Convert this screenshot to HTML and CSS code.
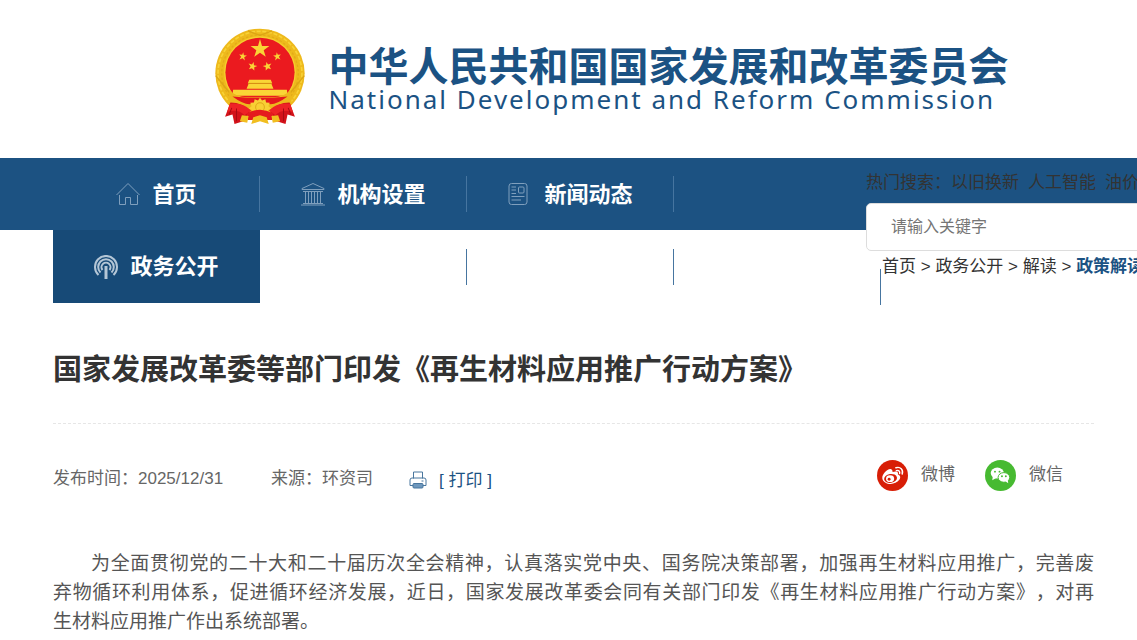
FILE: index.html
```html
<!DOCTYPE html>
<html lang="zh-CN">
<head>
    <meta charset="UTF-8">
    <meta name="viewport" content="width=device-width, initial-scale=1.0">
    <title>国家发展改革委等部门印发《再生材料应用推广行动方案》</title>
    <link rel="stylesheet" href="styles.css">
</head>
<body>
    <header class="site-header">
        <svg class="emblem" viewBox="30 28 268 288" aria-hidden="true">
            <circle cx="164" cy="161" r="133" fill="#eeb91c"/>
            <circle cx="164" cy="161" r="125" fill="none" stroke="#f8d236" stroke-width="5" stroke-dasharray="12 5"/>
            <circle cx="164" cy="161" r="114" fill="none" stroke="#e3ab18" stroke-width="4" stroke-dasharray="7 6"/>
            <circle cx="164" cy="158" r="107" fill="#f5cd2d"/>
            <circle cx="164" cy="158" r="103" fill="#eb1a1f"/>
            <path d="M32 168 L76 222 M296 168 L252 222 M128 35 L164 48 L200 35" fill="none" stroke="#dca515" stroke-width="4"/>
            <g fill="#fad536">
                <path d="M164 59 L170 80 L192 80 L175 92 L181 112 L164 100 L147 112 L153 92 L136 80 L158 80 Z"/>
                <path d="M114 98 L116 107 L125 108 L117 113 L119 123 L112 116 L103 120 L108 112 L102 105 L111 106 Z"/>
                <path d="M214 98 L212 107 L203 108 L211 113 L209 123 L216 116 L225 120 L220 112 L226 105 L217 106 Z"/>
                <path d="M145 127 L146 137 L156 139 L147 143 L147 153 L140 146 L131 149 L136 140 L130 132 L140 135 Z"/>
                <path d="M183 127 L182 137 L172 139 L181 143 L181 153 L188 146 L197 149 L192 140 L198 132 L188 135 Z"/>
                <path d="M132 180 H196 L200 190 H128 Z M130 192 H198 L204 207 H124 Z M84 210 H244 L246 228 H82 Z"/>
            </g>
            <path d="M128 191 H200" stroke="#d59a12" stroke-width="3"/>
            <path d="M73 210 Q90 232 128 232 H200 Q238 232 255 210 L258 250 Q210 260 199 280 H129 Q118 260 70 250 Z" fill="#edb71d"/>
            <path d="M82 230 Q120 258 140 252 H188 Q208 258 246 230 L200 234 H128 Z" fill="#e4181d"/>
            <path d="M76 248 L60 290 L82 284 L88 312 L114 304 L134 276 Q112 248 76 248 Z M252 248 L268 290 L246 284 L240 312 L214 304 L194 276 Q216 248 252 248 Z" fill="#d3121a"/>
            <path d="M74 252 Q112 246 138 272 L118 286 Q98 266 66 276 Z M254 252 Q216 246 190 272 L210 286 Q230 266 262 276 Z" fill="#ee2226"/>
            <path d="M164 234 L170 242 L180 238 L182 248 L193 249 L189 259 L197 266 L187 271 L188 281 H140 L141 271 L131 266 L139 259 L135 249 L146 248 L148 238 L158 242 Z" fill="#f8d034"/>
            <circle cx="164" cy="262" r="13" fill="none" stroke="#e0a71a" stroke-width="3"/>
            <path d="M125 280 Q164 259 203 280 L200 300 H128 Z" fill="#e51a1e"/>
            <path d="M110 286 L130 288 L126 308 L104 304 Z M218 286 L198 288 L202 308 L224 304 Z M144 292 L164 286 L184 292 L190 312 L164 304 L138 312 Z" fill="#f1be20"/>
            <path d="M80 264 L72 284 M94 266 L94 304 M248 264 L256 284 M234 266 L234 304" stroke="#a80b13" stroke-width="3"/>
        </svg>
        <div class="site-name">
            <div class="site-name-cn">中华人民共和国国家发展和改革委员会</div>
            <div class="site-name-en">National Development and Reform Commission</div>
        </div>
    </header>

    <nav class="main-nav">
        <ul class="nav-row">
            <li>
                <a href="#">
                    <svg class="nav-icon" viewBox="0 0 24 24" aria-hidden="true"><path d="M.5 13 L12 1.500 L23.500 13 M3.500 13 V22.500 H9.500 V15.500 H14.500 V22.500 H21.500 V13"/></svg>
                    <span>首页</span>
                </a>
            </li>
            <li>
                <a href="#">
                    <svg class="nav-icon" viewBox="0 0 24 24" aria-hidden="true"><path d="M1 6.500 L12 1.500 L23 6.500 V7.500 H1 Z M2 9.500 H22 M4.500 10 V21 M7.500 10 V21 M10.500 10 V21 M13.500 10 V21 M16.500 10 V21 M19.500 10 V21 M2 21.500 H22 M0 23 H24"/></svg>
                    <span>机构设置</span>
                </a>
            </li>
            <li>
                <a href="#">
                    <svg class="nav-icon nav-icon-news" viewBox="0 0 20 24" aria-hidden="true"><rect x="1" y="1.500" width="18" height="21" rx="2.500"/><rect x="10.500" y="5" width="5.500" height="6" rx="1"/><path d="M3.500 5 H8 M3.500 8 H8 M3.500 11.500 H8 M3.500 14.500 H16.500 M3.500 18 H13"/></svg>
                    <span>新闻动态</span>
                </a>
            </li>
        </ul>
        <ul class="nav-row nav-row-second">
            <li class="active">
                <a href="#">
                    <svg class="nav-icon nav-icon-open" viewBox="0 0 24 24" aria-hidden="true"><path d="M4.500 20 A11 11 0 1 1 19.500 20 M6.500 17.500 A7.800 7.800 0 1 1 17.500 17.500 M8.500 15 A4.500 4.500 0 1 1 15.500 15"/><path class="mast" d="M12 11 V24"/></svg>
                    <span>政务公开</span>
                </a>
            </li>
            <li></li>
            <li></li>
            <li class="last"></li>
        </ul>
        <div class="search-panel">
            <div class="hot-words">热门搜索：<a href="#">以旧换新</a><a href="#">人工智能</a><a href="#">油价</a></div>
            <input class="search-input" type="text" placeholder="请输入关键字" aria-label="请输入关键字">
            <div class="breadcrumb"><a href="#">首页</a> &gt; <a href="#">政务公开</a> &gt; <a href="#">解读</a> &gt; <a class="current" href="#">政策解读</a></div>
        </div>
    </nav>

    <main class="article">
        <h1>国家发展改革委等部门印发《再生材料应用推广行动方案》</h1>
        <div class="article-info">
            <span class="publish-time">发布时间：2025/12/31</span>
            <span class="source">来源：环资司</span>
            <button class="print" type="button">
                <svg class="print-icon" viewBox="0 0 18 18" aria-hidden="true"><path d="M4.500 7.500 V1 H13.500 V7.500 M4 14.500 H1 V9 Q1 7 3 7 H15 Q17 7 17 9 V14.500 H14" fill="#fff"/><rect class="paper" x="4" y="12.500" width="10" height="4.500" rx="1"/><path d="M12.500 10 H14.500"/></svg>
                [ 打印 ]
            </button>
            <div class="share">
                <a href="#">
                    <svg class="share-icon" viewBox="0 0 32 32" aria-hidden="true">
                        <circle cx="16" cy="16" r="16" fill="#d81e06"/>
                        <path d="M5.500 19 C5 15 11 8.500 14.500 9.500 C16.500 10 16 12.500 16 12.500 C20 11 22.500 12 21.500 15 C24 15.800 24.800 18 23 20.500 C18.500 27 6.500 25.500 5.500 19 Z" fill="#fff"/>
                        <ellipse cx="14" cy="19" rx="6.700" ry="4.600" transform="rotate(-9 14 19)" fill="#d81e06"/>
                        <ellipse cx="13.500" cy="19.300" rx="4.200" ry="3.500" fill="#fff"/>
                        <circle cx="12.500" cy="19.800" r="1.500" fill="#d81e06"/>
                        <path d="M19.500 8 C24 6.500 27.500 10 26 14.500 M20 11 C22.500 10.200 24 12 23.300 14" fill="none" stroke="#fff" stroke-width="1.500" stroke-linecap="round"/>
                    </svg>
                    微博
                </a>
                <a href="#">
                    <svg class="share-icon" viewBox="0 0 32 32" aria-hidden="true">
                        <circle cx="16" cy="16" r="16" fill="#47ba31"/>
                        <ellipse cx="12.700" cy="13.500" rx="6.800" ry="5.700" fill="#fff"/>
                        <path d="M8 17 L7.500 21 L11.500 18.500 Z" fill="#fff"/>
                        <ellipse cx="19.500" cy="18" rx="6" ry="5" fill="#fff" stroke="#47ba31"/>
                        <path d="M21 22 L24 24 L23.500 20.500 Z" fill="#fff"/>
                        <g fill="#47ba31"><circle cx="10.300" cy="12" r="1"/><circle cx="15" cy="12" r="1"/><circle cx="17.500" cy="16.700" r="1"/><circle cx="21.500" cy="16.700" r="1"/></g>
                    </svg>
                    微信
                </a>
            </div>
        </div>
        <p class="article-text">为全面贯彻党的二十大和二十届历次全会精神，认真落实党中央、国务院决策部署，加强再生材料应用推广，完善废<span class="keep">弃物</span>循环利用体系，促进循环经济发展，近日，国家发展改革委会同有关部门印发《再生材料应用推广行动方案》，对再<span class="keep">生材</span>料应用推广作出系统部署。</p>
    </main>
</body>
</html>
```
FILE: styles.css
```css
* {
    box-sizing: border-box;
}
body {
    margin: 0;
    font-family: "Liberation Sans", "Noto Sans CJK SC", sans-serif;
    font-size: 17px;
    color: #333;
    background-color: #fff;
    overflow-x: hidden;
    text-spacing-trim: space-all;
}
a {
    color: inherit;
    text-decoration: none;
}
ul {
    list-style: none;
    margin: 0;
    padding: 0;
}

/* header */
.site-header {
    display: flex;
    justify-content: center;
    gap: 24px;
    padding: 28px 0 32px 86px;
    color: #1b5283;
}
.emblem {
    width: 90px;
    height: 98px;
}
.site-name {
    padding-top: 19px;
    white-space: nowrap;
}
.site-name-cn {
    font-size: 40px;
    font-weight: bold;
    line-height: 40px;
}
.site-name-en {
    font-family: "Noto Sans", sans-serif;
    font-size: 26px;
    line-height: 24px;
    letter-spacing: 2px;
}

/* navigation */
.main-nav {
    position: relative;
    background: linear-gradient(#1c5282 72px, #fff 72px);
}
.nav-row {
    display: flex;
    padding-left: 53px;
}
.nav-row li {
    display: flex;
    flex: 0 0 207px;
    height: 72px;
    position: relative;
}
.nav-row li::after {
    content: "";
    position: absolute;
    right: 0;
    top: 18px;
    width: 1px;
    height: 36px;
    background-color: #4675a0;
}
.nav-row a {
    flex: 1;
    display: flex;
    align-items: center;
    justify-content: center;
    gap: 12px;
    color: #fff;
    font-size: 22px;
    font-weight: bold;
}
.nav-row a span {
    padding-bottom: 5px;
}
.nav-row .active {
    height: 73px;
    background-color: #174a77;
}
.nav-row .active::after {
    display: none;
}
.nav-row-second li::after {
    top: 19px;
}
.nav-row-second .last::after {
    top: 39px;
}
.nav-icon {
    width: 24px;
    height: 24px;
    fill: none;
    stroke: #7f9fbd;
    stroke-width: 1;
}
.nav-icon-news {
    width: 20px;
    margin-right: 4px;
}
.nav-icon-open {
    stroke: #b4c6d6;
    stroke-width: 2;
}
.mast {
    stroke-width: 3;
}

/* search */
.search-panel {
    position: absolute;
    left: 866px;
    right: 0;
    top: 13px;
    overflow: hidden;
    white-space: nowrap;
}
.hot-words {
    line-height: 24px;
    margin-bottom: 8px;
}
.hot-words a {
    margin-right: 9px;
}
.search-input {
    display: block;
    width: 400px;
    height: 48px;
    padding: 0 24px;
    border: 1px solid #ddd;
    border-radius: 5px;
    background-color: #fff;
    font-family: inherit;
    font-size: 16px;
}
.search-input::placeholder {
    color: #757575;
}
.breadcrumb {
    padding-left: 16px;
    line-height: 32px;
}
.current {
    color: #1b5283;
    font-weight: bold;
}

/* article */
.article {
    padding: 0 43px 0 53px;
}
h1 {
    margin: 0;
    padding: 45px 0 31px;
    border-bottom: 1px dashed #e6e6e6;
    font-size: 29px;
    line-height: 44px;
}
.article-info {
    display: flex;
    align-items: center;
    padding: 31px 31px 0 0;
    color: #666;
    line-height: 32px;
}
.publish-time,
.source {
    padding-top: 8px;
}
.source {
    margin-left: 48px;
}
.print {
    display: flex;
    align-items: center;
    gap: 12px;
    margin-left: 36px;
    padding: 6px 0 0;
    border: 0;
    background: none;
    color: #1b5283;
    font-family: inherit;
    font-size: 17px;
    cursor: pointer;
}
.print-icon {
    width: 18px;
    height: 18px;
    margin-top: 4px;
    fill: none;
    stroke: #49769e;
    stroke-width: 1;
}
.print-icon .paper {
    fill: #6f98bd;
}
.share {
    display: flex;
    gap: 30px;
    margin-left: auto;
}
.share a {
    display: flex;
    align-items: center;
    gap: 13px;
}
.share-icon {
    width: 31px;
    height: 31px;
}
.article-text {
    margin: 54px 0 0;
    color: #555;
    font-size: 19px;
    line-height: 29px;
    text-indent: 2em;
    text-align: justify;
}
.keep {
    white-space: nowrap;
}
```
